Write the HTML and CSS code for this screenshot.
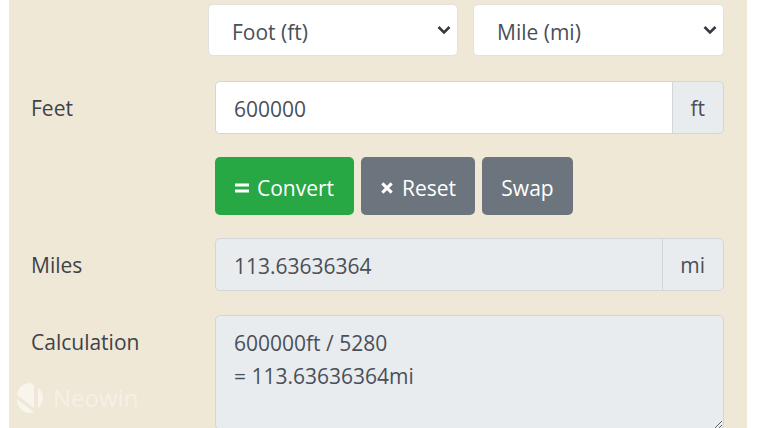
FILE: index.html
```html
<!DOCTYPE html>
<html lang="en">
<head>
<meta charset="utf-8">
<title>Feet to Miles</title>
<link rel="stylesheet" href="styles.css">
</head>
<body>
<main class="panel">
  <div class="row selects">
    <select class="select"><option>Foot (ft)</option></select>
    <select class="select"><option>Mile (mi)</option></select>
  </div>
  <div class="row field first">
    <label class="label">Feet</label>
    <div class="group">
      <input class="control" value="600000">
      <span class="unit">ft</span>
    </div>
  </div>
  <div class="row actions">
    <div class="buttons">
      <button class="btn convert"><svg class="icon" viewBox="0 0 14 10"><path d="M0 0.5h14v3H0zM0 6.5h14v3H0z"/></svg>Convert</button>
      <button class="btn reset"><svg class="icon small" viewBox="0 0 12 12"><path d="M2 2l8 8M10 2l-8 8" stroke="#fff" stroke-width="2.6" fill="none"/></svg>Reset</button>
      <button class="btn swap">Swap</button>
    </div>
  </div>
  <div class="row field">
    <label class="label">Miles</label>
    <div class="group">
      <input class="control readonly" value="113.63636364" readonly>
      <span class="unit">mi</span>
    </div>
  </div>
  <div class="row calc">
    <label class="label">Calculation</label>
    <textarea class="area" readonly>600000ft / 5280
= 113.63636364mi</textarea>
  </div>
</main>
<div class="mark">
  <svg class="mark-logo" viewBox="0 0 30 32"><path d="M15 1C8 1 3 6 2 13l17 13V4c-1-2-3-3-4-3zM2 17c0 7 5 14 13 14 2 0 3-1 4-1L2 17zM23 6v20c3-3 5-7 5-11 0-3-2-7-5-9z"/></svg>
  <span class="mark-text">Neowin</span>
</div>
</body>
</html>
```
FILE: styles.css
```css
* { box-sizing: border-box; }
html, body { margin: 0; height: 100%; overflow: hidden; background: #fff; }
body {
  position: relative;
  font-family: "Open Sans", "Liberation Sans", sans-serif;
  font-size: 21px;
  color: #3d4349;
}
.panel {
  width: 738px;
  height: 428px;
  margin-left: 9px;
  padding: 4px 23px 0 22px;
  background: #efe8d6;
  overflow: hidden;
}
.row { display: grid; grid-template-columns: 184px 1fr; }
.selects {
  grid-template-columns: 250px 251px;
  column-gap: 15px;
  margin-left: 177px;
  margin-bottom: 25px;
}
.field { height: 53px; align-items: center; margin-bottom: 24px; }
.field.first { margin-bottom: 23px; }
.actions { margin-bottom: 23px; }
.buttons { grid-column: 2; display: flex; gap: 7px; }
.label { padding-top: 2px; line-height: 51px; align-self: start; }
.select {
  appearance: none;
  height: 52px;
  padding: 3px 23px 0;
  font: inherit;
  color: #495057;
  background: #fff url("data:image/svg+xml,%3Csvg xmlns='http://www.w3.org/2000/svg' viewBox='0 0 14 10'%3E%3Cpath d='M1.5 2l5.5 5.5L12.5 2' fill='none' stroke='%23343a40' stroke-width='2.6'/%3E%3C/svg%3E") no-repeat right 6px center / 14px 10px;
  border: 1px solid #e3e1dc;
  border-radius: 5px;
}
.group { display: flex; height: 53px; }
.control {
  flex: 1;
  min-width: 0;
  padding: 2px 18px 0;
  font: inherit;
  color: #495057;
  background: #fff;
  border: 1px solid #d3d5d6;
  border-right: 0;
  border-radius: 5px 0 0 5px;
}
.control.readonly { background: #e9ecef; }
.unit {
  display: flex;
  align-items: center;
  padding: 0 18px 0 17px;
  color: #495057;
  background: #e9ecef;
  border: 1px solid #d3d5d6;
  border-radius: 0 5px 5px 0;
}
.btn {
  display: flex;
  align-items: center;
  justify-content: center;
  height: 58px;
  padding: 4px 0 0;
  font: inherit;
  color: #fff;
  border: 0;
  border-radius: 5px;
}
.convert { width: 139px; background: #28a745; }
.reset { width: 114px; background: #6c757d; }
.swap { width: 91px; background: #6c757d; }
.icon { width: 14px; height: 10px; margin-right: 8px; fill: #fff; }
.icon.small { width: 14px; height: 14px; margin-right: 8px; }
.calc { height: 120px; }
.area {
  display: block;
  width: 100%;
  height: 115px;
  padding: 11px 18px;
  font: inherit;
  line-height: 33px;
  color: #495057;
  background: #e9ecef;
  border: 1px solid #d3d5d6;
  border-radius: 5px;
  overflow: hidden;
}
.mark {
  position: absolute;
  left: 15px;
  top: 382px;
  display: flex;
  align-items: center;
  gap: 8px;
  color: rgba(255, 255, 255, 0.38);
}
.mark-logo { width: 30px; height: 32px; fill: rgba(255, 255, 255, 0.55); }
.mark-text { font-size: 24px; line-height: 32px; }
```
